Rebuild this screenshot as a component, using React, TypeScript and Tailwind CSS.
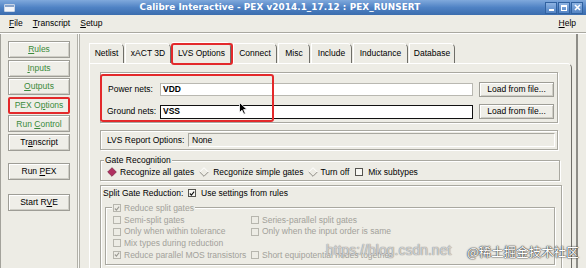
import React from 'react';

const etched = 'border border-[#a9a8a0] shadow-[inset_1px_1px_0_#ffffff,1px_1px_0_#ffffff]';
const raised = 'border border-[#9e9d96] bg-[#efeee8] shadow-[inset_1px_1px_0_#ffffff,inset_-1px_-1px_0_#cfcec6]';

function U({ children }: { children: React.ReactNode }) {
  return <span className="underline underline-offset-[1px]">{children}</span>;
}

function Check({ checked, disabled }: { checked?: boolean; disabled?: boolean }) {
  return (
    <span
      className={
        disabled
          ? 'w-[8px] h-[8px] shrink-0 border border-[#b7b6ae] flex items-center justify-center'
          : 'w-[8px] h-[8px] shrink-0 border border-[#55544f] bg-[#f7f7f3] flex items-center justify-center'
      }
    >
      {checked && (
        <svg width="7" height="7" viewBox="0 0 7 7">
          <path d="M1 3.5 L2.8 5.3 L6 1.3" fill="none" stroke={disabled ? '#9c9b94' : '#111'} strokeWidth="1.3" />
        </svg>
      )}
    </span>
  );
}

function Diamond({ on }: { on?: boolean }) {
  return (
    <svg width="10" height="10" viewBox="0 0 10 10" className="shrink-0">
      {on ? (
        <polygon points="5,0.7 9.3,5 5,9.3 0.7,5" fill="#b03060" stroke="#7d2446" strokeWidth="0.8" />
      ) : (
        <>
          <polyline points="0.7,5 5,0.7 9.3,5" fill="none" stroke="#ffffff" strokeWidth="1" />
          <polyline points="0.7,5 5,9.3 9.3,5" fill="none" stroke="#8f8e87" strokeWidth="1" />
        </>
      )}
    </svg>
  );
}

const tabs: [string, number][] = [
  ['Netlist', 35],
  ['xACT 3D', 46],
  ['LVS Options', 59],
  ['Connect', 44],
  ['Misc', 32],
  ['Include', 41],
  ['Inductance', 55],
  ['Database', 46],
];

function SideButton({ children, red, green = true }: { children: React.ReactNode; red?: boolean; green?: boolean }) {
  return (
    <div
      className={
        (red
          ? 'border-2 border-[#e3292b] rounded-[2px] bg-[#efeee8] '
          : raised + ' ') +
        'h-[17px] mx-[7px] flex items-center justify-center ' +
        (green ? 'text-[#3a8a3a]' : 'text-black')
      }
    >
      <span>{children}</span>
    </div>
  );
}

export default function App() {
  return (
    <div className="w-[586px] h-[268px] overflow-hidden bg-[#edece5] font-['Liberation_Sans',Arial,sans-serif] text-[8.5px] leading-none text-black flex flex-col relative">
      {/* Title bar */}
      <div className="h-[15px] shrink-0 flex items-center bg-gradient-to-b from-[#80a9dc] via-[#4f82c4] to-[#3b6dae]">
        <div className="ml-[4px] w-[11px] h-[8px] bg-[#f4f6fa] border border-[#c8d4e6] rounded-[1px] flex flex-col">
          <div className="h-[2px] bg-[#86a3cb]" />
        </div>
        <div className="flex-1 text-center text-white font-bold text-[8.8px] font-['DejaVu_Sans',sans-serif] tracking-[0.1px]">
          Calibre Interactive - PEX v2014.1_17.12 : PEX_RUNSERT
        </div>
        <div className="flex gap-[1px] mr-[3px]">
          <div className="w-[12px] h-[12px] border border-[#3162a0] bg-gradient-to-b from-[#8db3e2] to-[#5384c4] flex items-end justify-center pb-[2px]">
            <div className="w-[5px] h-[2px] bg-white" />
          </div>
          <div className="w-[12px] h-[12px] border border-[#3162a0] bg-gradient-to-b from-[#8db3e2] to-[#5384c4] flex items-center justify-center">
            <div className="w-[6px] h-[6px] border border-white border-t-2" />
          </div>
          <div className="w-[12px] h-[12px] border border-[#3162a0] bg-gradient-to-b from-[#8db3e2] to-[#5384c4] flex items-center justify-center">
            <svg width="7" height="7" viewBox="0 0 7 7">
              <path d="M1 1 L6 6 M6 1 L1 6" stroke="#fff" strokeWidth="1.6" />
            </svg>
          </div>
        </div>
      </div>

      {/* Menu bar */}
      <div className="h-[18px] shrink-0 flex items-center pl-[9px] pr-[10px] gap-[10px] border-b border-[#a9a8a0] shadow-[0_1px_0_#ffffff] text-[8.5px]">
        <span><U>F</U>ile</span>
        <span><U>T</U>ranscript</span>
        <span><U>S</U>etup</span>
        <span className="ml-auto"><U>H</U>elp</span>
      </div>

      {/* Body */}
      <div className="flex-1 flex min-h-0 mt-[1px]">
        {/* Left panel */}
        <div className="w-[77px] shrink-0 border-l border-[#a3a29b] flex flex-col pt-[7px]">
          <div className="flex flex-col gap-[1.6px]">
            <SideButton><U>R</U>ules</SideButton>
            <SideButton><U>I</U>nputs</SideButton>
            <SideButton><U>O</U>utputs</SideButton>
            <SideButton red>PEX O<U>p</U>tions</SideButton>
            <SideButton>Run <U>C</U>ontrol</SideButton>
            <SideButton green={false}>Tr<U>a</U>nscript</SideButton>
          </div>
          <div className="mt-[12px]">
            <SideButton green={false}>Run <U>P</U>EX</SideButton>
          </div>
          <div className="mt-[14px]">
            <SideButton green={false}>Start R<U>V</U>E</SideButton>
          </div>
        </div>
        <div className="w-[3px] shrink-0 border-l border-r border-[#b1b0a8] bg-[#f9f9f5]" />

        {/* Main area */}
        <div className="flex-1 flex flex-col pt-[7px] pl-[9px] pr-[4px] border-r-2 border-[#8e8d87] mr-[8px] min-w-0">
          {/* Tabs */}
          <div className="flex items-end h-[22px] shrink-0">
            {tabs.map(([t, w]) =>
              t === 'LVS Options' ? (
                <div
                  key={t}
                  className="relative h-[22px] mb-[-1px] z-10 bg-[#edece5] border-t border-l border-white border-r border-r-[#6f6e68] rounded-tr-[5px] flex items-center justify-center mr-[2px]"
                  style={{ width: w }}
                >
                  {t}
                  <div className="absolute left-[-2px] right-[-3px] top-[0px] bottom-[-1px] border-2 border-[#e3292b] rounded-[3px]" />
                </div>
              ) : (
                <div
                  key={t}
                  className="h-[20px] border-t border-l border-white border-r border-r-[#6f6e68] rounded-tr-[5px] flex items-center justify-center mr-[1px]"
                  style={{ width: w }}
                >
                  {t}
                </div>
              )
            )}
          </div>

          {/* Tab panel */}
          <div className="flex-1 border-t border-l border-white border-r border-r-[#6f6e68] rounded-tr-[5px] pl-[10px] pt-[8px] flex flex-col">
            {/* Nets */}
            <div className={etched + ' relative w-[458px] pt-[9px] pb-[3px] flex flex-col gap-[7px]'}>
              <div className="flex items-center h-[15px] pl-[7px] pr-[3px]">
                <span className="w-[52px] shrink-0">Power nets:</span>
                <div className="w-[313px] h-[13px] bg-white border border-[#b9b8b1] flex items-center pl-[2px] font-bold">VDD</div>
                <div className={raised + ' ml-[6px] w-[75px] h-[15px] flex items-center justify-center'}>Load from file...</div>
              </div>
              <div className="flex items-center h-[15px] pl-[6px] pr-[3px]">
                <span className="w-[53px] shrink-0">Ground nets:</span>
                <div className="w-[313px] h-[14px] bg-white border border-[#111] flex items-center pl-[2px] font-bold">VSS</div>
                <div className={raised + ' ml-[6px] w-[75px] h-[15px] flex items-center justify-center'}>Load from file...</div>
              </div>
              <div className="absolute left-[-1px] top-[1px] w-[174px] h-[48px] border-2 border-[#e3292b] rounded-[3px]" />
              <svg className="absolute left-[138px] top-[29px]" width="9" height="13" viewBox="0 0 9 13">
                <path d="M0.5 0.5 L0.5 10.5 L3 8.2 L4.8 12.2 L6.4 11.5 L4.6 7.6 L8 7.6 Z" fill="#000" stroke="#fff" strokeWidth="0.8" />
              </svg>
            </div>

            {/* LVS Report Options */}
            <div className={etched + ' mt-[7px] w-[458px] h-[20px] flex items-center pl-[6px]'}>
              <span className="w-[81px] shrink-0">LVS Report Options:</span>
              <div className="w-[367px] h-[14px] border border-[#a9a8a0] border-r-white border-b-white flex items-center pl-[3px]">None</div>
            </div>

            {/* Gate Recognition */}
            <div className={etched + ' relative mt-[10px] w-[460px] h-[21px] flex items-center pl-[6px] pt-[3px]'}>
              <span className="absolute -top-[6px] left-[3px] bg-[#edece5] px-[1px] leading-[10px]">Gate Recognition</span>
              <Diamond on />
              <span className="ml-[3px]">Recognize all gates</span>
              <span className="ml-[5px]"><Diamond /></span>
              <span className="ml-[4px]">Recgonize simple gates</span>
              <span className="ml-[5px]"><Diamond /></span>
              <span className="ml-[2px]">Turn off</span>
              <span className="ml-[6px]"><Check /></span>
              <span className="ml-[5px]">Mix subtypes</span>
            </div>

            {/* Split Gate Reduction */}
            <div className={etched + ' mt-[4px] w-[462px] pl-[2px] pt-[1px] pb-[4px] flex flex-col'}>
              <div className="h-[12px] flex items-center">
                <span className="w-[85px] shrink-0">Split Gate Reduction:</span>
                <Check checked />
                <span className="ml-[5px]">Use settings from rules</span>
              </div>
              <div className={etched + ' relative mt-[8px] ml-[2px] w-[450px] pl-[7px] pt-[6px] pb-[3px] text-[#a2a19a]'}>
                <div className="absolute -top-[5px] left-[6px] bg-[#edece5] px-[1px] flex items-center gap-[3px] leading-[10px]">
                  <Check checked disabled />
                  <span>Reduce split gates</span>
                </div>
                <div className="grid grid-cols-[138px_1fr] auto-rows-[11.7px]">
                  <div className="flex items-center gap-[3px]"><Check disabled /><span>Semi-split gates</span></div>
                  <div className="flex items-center gap-[3px]"><Check disabled /><span>Series-parallel split gates</span></div>
                  <div className="flex items-center gap-[3px]"><Check disabled /><span>Only when within tolerance</span></div>
                  <div className="flex items-center gap-[3px]"><Check disabled /><span>Only when the input order is same</span></div>
                  <div className="flex items-center gap-[3px]"><Check disabled /><span>Mix types during reduction</span></div>
                  <div />
                  <div className="flex items-center gap-[3px]"><Check checked disabled /><span>Reduce parallel MOS transistors</span></div>
                  <div className="flex items-center gap-[3px]"><Check disabled /><span>Short equipotential nodes together</span></div>
                </div>
              </div>
            </div>
          </div>
        </div>
      </div>

      {/* Watermarks */}
      <div className="absolute left-[326px] top-[243px] text-[14px] text-white/60 [text-shadow:0_0_1px_#888,0_0_1px_#888] pointer-events-none">
        https://blog.csdn.net
      </div>
      <div className="absolute left-[467px] top-[246px] text-[12.5px] text-white font-['Noto_Sans_CJK_SC',sans-serif] [text-shadow:0_0_1px_#333,0_0_1px_#333,0_0_2px_#555] pointer-events-none">
        @稀土掘金技术社区
      </div>
    </div>
  );
}
